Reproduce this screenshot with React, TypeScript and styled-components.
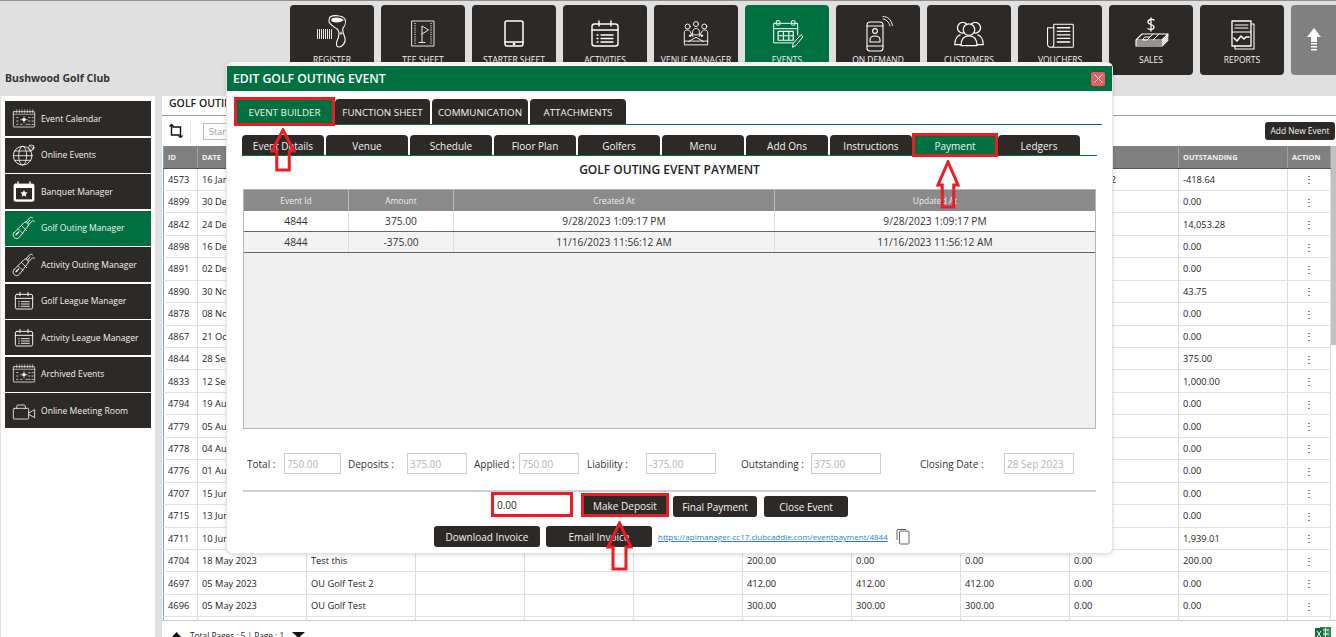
import React from 'react';
import styled, { createGlobalStyle } from 'styled-components';

const DARK = '#2d2926';
const GREEN = '#007041';
const RED = '#ed1c24';
const FONT = '"Open Sans", "Noto Sans", sans-serif';

const GlobalStyle = createGlobalStyle`
  html, body { margin: 0; padding: 0; overflow: hidden; }
  body { font-family: ${FONT}; }
  * { box-sizing: border-box; }
`;

const Line = ({ children, size = 36, view = 36 }: { children: React.ReactNode; size?: number; view?: number }) => (
  <svg width={size} height={size} viewBox={`0 0 ${view} ${view}`} fill="none" stroke="#fff" strokeWidth="1.1" strokeLinecap="round" strokeLinejoin="round">
    {children}
  </svg>
);

const RegisterIcon = () => (
  <Line>
    <path d="M16 1C19-1 28-1 31 3c1 3 0 7-2 9-1 3 1 7 2 10 1 5-3 9-6 9-3 0-3-3-2-6 2-4 3-7 1-11-3-3-7-4-9-8 0-2 0-4 1-5z" />
    <path d="M18 3c3-1 8-1 11 1-3 2-8 2-11 1z" fill="#fff" />
    <path d="M27 16v2.500M25.800 17.200h2.400" strokeWidth="0.9" />
    <g strokeLinecap="butt" strokeWidth="1" stroke="#e8e8e8">
      <path d="M3.500 13v10M5.500 13v10M7.500 13v10M9.500 13v10M11.500 13v10M13.500 13v10M15.500 13v10M17.500 13v10" />
    </g>
  </Line>
);
const TeeSheetIcon = () => (
  <Line>
    <rect x="7" y="5" width="22" height="25" strokeWidth="0.9" />
    <path d="M10 7v21M26 7v21" strokeDasharray="1 1.200" strokeWidth="1.100" strokeLinecap="butt" />
    <path d="M17 26V10l6.500 4-6.500 4" strokeWidth="0.9" />
    <path d="M14 26.500h6" strokeWidth="0.9" />
  </Line>
);
const TabletIcon = () => (
  <Line>
    <rect x="9" y="5" width="18" height="25" rx="2" strokeWidth="1.500" />
    <path d="M9 26h18" strokeWidth="1.300" />
    <circle cx="18" cy="28" r="0.800" fill="#fff" />
  </Line>
);
const CalendarListIcon = ({ size = 36 }: { size?: number }) => (
  <Line size={size}>
    <rect x="5" y="8" width="26" height="22" rx="2.500" strokeWidth="1.400" />
    <path d="M5 14h26M12 5v5M24 5v5" strokeWidth="1.400" />
    <path d="M10 19h1M14 19h12M10 22.500h1M14 22.500h12M10 26h1M14 26h12" strokeWidth="1.300" />
  </Line>
);
const VenueIcon = () => (
  <Line size={30}>
    <circle cx="18" cy="6" r="3" />
    <circle cx="8" cy="9" r="3" />
    <circle cx="28" cy="9" r="3" />
    <path d="M14 15c0-5 8-5 8 0v4h-8zM4 27V16c0-3 5-4 7-1l3 6M32 27V16c0-3-5-4-7-1l-3 6" />
    <path d="M9 27l9-5 9 5M4 27v4h28v-4z" />
    <circle cx="11" cy="20" r="1" fill="#fff" />
    <circle cx="25" cy="20" r="1" fill="#fff" />
  </Line>
);
const EventsIcon = () => (
  <Line size={32}>
    <path d="M25 28H3V6h27v13M3 12h27" />
    <rect x="6" y="3" width="4" height="5" rx="1" />
    <rect x="23" y="3" width="4" height="5" rx="1" />
    <path d="M8 15h17v10H8zM8 20h17M14 15v10M20 15v10" strokeWidth="1.300" />
    <path d="M34 19l2 2-8 10-4 2 1-4z" />
  </Line>
);
const DemandIcon = () => (
  <Line>
    <rect x="7" y="6" width="16" height="29" rx="3" />
    <path d="M7 30h16M7 10h16" />
    <circle cx="15" cy="15" r="2.400" />
    <path d="M10 26v-2c0-3 3-4 5-4s5 1 5 4v2z" />
    <path d="M23 3c3 0 6 3 7 7M23 0.500c5 0 8 3 9.500 9" strokeWidth="0.900" />
  </Line>
);
const CustomersIcon = () => (
  <Line size={32}>
    <circle cx="11" cy="11" r="6" strokeWidth="1.400" />
    <circle cx="25" cy="11" r="6" strokeWidth="1.400" />
    <circle cx="18" cy="13" r="6.500" strokeWidth="1.400" fill={DARK} />
    <path d="M8 19c-3 1-6 5-6 11h7M28 19c3 1 6 5 6 11h-7" strokeWidth="1.400" />
    <path d="M9 31c0-7 3-11 9-11s9 4 9 11z" strokeWidth="1.400" fill={DARK} />
  </Line>
);
const VouchersIcon = () => (
  <Line size={32}>
    <path d="M11 7h21a1 1 0 0 1 1 1v24a1 1 0 0 1-1 1H8M11 7v23c0 2-2 3-3 3s-4-1-4-3V11h7" strokeWidth="1.200" />
    <path d="M15 11h14M15 15h14M15 19h14M15 23h14M15 27h14" strokeWidth="1.500" />
  </Line>
);
const SalesIcon = () => (
  <Line>
    <path d="M21 4c-1-1-6-1-6 2s6 2 6 5-5 3-6 1.500M18 2v13" strokeWidth="1.300" />
    <path d="M9 18h26l-6 6H3zM3 24v2h26l6-6v-2M3 26v2h26l6-6M3 28v2h26l6-6" strokeWidth="1.100" />
    <path d="M12 21h5l-3 3h-4zM20 18l-6 6M26 18l-6 6" strokeWidth="1" />
  </Line>
);
const ReportsIcon = () => (
  <Line>
    <path d="M27 8h3v25H11v-3" />
    <rect x="8" y="5" width="19" height="25" strokeWidth="1.300" />
    <path d="M11 9h13M11 12h13" strokeWidth="1.200" />
    <path d="M10 22l3 3 4-5 3 3 2-2h3" strokeWidth="1.500" />
    <path d="M8 16h19" />
  </Line>
);

const DottedCalendar = () => (
  <Line size={30}>
    <rect x="2" y="7" width="32" height="23" rx="1" strokeWidth="1.100" />
    <path d="M2 11h32M7 4v5M11 4v5M15 4v5M19 4v5M23 4v5M27 4v5M31 4v5" strokeWidth="0.800" />
    <path d="M7 16h2M7 21h2M7 26h2M25 16h2M30 16h2M25 21h2M30 21h2M25 26h2M30 26h2M13 26h2M21 26h2" strokeWidth="1.100" />
    <circle cx="18" cy="19" r="2.200" fill="#fff" />
    <path d="M18 14v1.500M18 22.500v1.500M13 19h1.500M21.500 19h1.500" strokeWidth="0.900" />
  </Line>
);
const GlobeIcon = () => (
  <Line size={30}>
    <circle cx="16" cy="19" r="14" strokeWidth="1.300" />
    <ellipse cx="16" cy="19" rx="6" ry="14" strokeWidth="1.200" />
    <path d="M2 19h28M4 12h24M4 26h24" strokeWidth="1.200" />
    <circle cx="29" cy="7" r="4" fill={DARK} />
    <path d="M26 3l6 6M25 8l4 4M32 4c1 2 0 5-2 6" strokeWidth="1" />
  </Line>
);
const BanquetIcon = () => (
  <Line size={30}>
    <rect x="3" y="6" width="30" height="26" rx="2" fill="#fff" />
    <path d="M9 3v6M27 3v6" strokeWidth="2" />
    <rect x="6" y="12" width="24" height="17" fill={DARK} stroke="none" />
    <path d="M18 15l1.600 3.500 3.900.400-2.900 2.500.9 3.800-3.500-2-3.500 2 .9-3.800-2.900-2.500 3.900-.400z" fill="#fff" stroke="none" />
  </Line>
);
const GolfBagIcon = () => (
  <Line size={30}>
    <path d="M3 25L18 10c3-3 8 1 6 5L11 32c-3 3-6 2-8 0-2-2-2-5 0-7z" strokeWidth="1.300" />
    <path d="M9 19l8 8M14 14l8 8" strokeWidth="1.100" />
    <path d="M6 28l4-4" strokeWidth="2" />
    <path d="M21 9l5-6c2-2 4-1 5 0M25 13l5-5c1-1 3-1 4 0M23 11l4-5" strokeWidth="1.300" />
  </Line>
);
const CameraIcon = () => (
  <Line size={30}>
    <rect x="2" y="14" width="23" height="16" rx="1.500" strokeWidth="1.200" />
    <path d="M7 14v-3c0-1 1-2 2-2h9c1 0 2 1 2 2v3M25 21l9-5v12l-9-5" strokeWidth="1.200" />
  </Line>
);

const NAV: { label: string; icon: React.ReactNode; active?: boolean }[] = [
  { label: 'REGISTER', icon: <RegisterIcon /> },
  { label: 'TEE SHEET', icon: <TeeSheetIcon /> },
  { label: 'STARTER SHEET', icon: <TabletIcon /> },
  { label: 'ACTIVITIES', icon: <CalendarListIcon /> },
  { label: 'VENUE MANAGER', icon: <VenueIcon /> },
  { label: 'EVENTS', icon: <EventsIcon />, active: true },
  { label: 'ON DEMAND', icon: <DemandIcon /> },
  { label: 'CUSTOMERS', icon: <CustomersIcon /> },
  { label: 'VOUCHERS', icon: <VouchersIcon /> },
  { label: 'SALES', icon: <SalesIcon /> },
  { label: 'REPORTS', icon: <ReportsIcon /> },
];

const MENU: { label: string; icon: React.ReactNode; active?: boolean }[] = [
  { label: 'Event Calendar', icon: <DottedCalendar /> },
  { label: 'Online Events', icon: <GlobeIcon /> },
  { label: 'Banquet Manager', icon: <BanquetIcon /> },
  { label: 'Golf Outing Manager', icon: <GolfBagIcon />, active: true },
  { label: 'Activity Outing Manager', icon: <GolfBagIcon /> },
  { label: 'Golf League Manager', icon: <CalendarListIcon size={30} /> },
  { label: 'Activity League Manager', icon: <CalendarListIcon size={30} /> },
  { label: 'Archived Events', icon: <DottedCalendar /> },
  { label: 'Online Meeting Room', icon: <CameraIcon /> },
];

const ROWS: string[][] = [
  ['4573', '16 Jan 2024', '', '', '', '', '', '', '10,000.02', '-418.64'],
  ['4899', '30 Dec 2023', '', '', '', '', '', '', '', '0.00'],
  ['4842', '24 Dec 2023', '', '', '', '', '', '', '', '14,053.28'],
  ['4898', '16 Dec 2023', '', '', '', '', '', '', '', '0.00'],
  ['4891', '02 Dec 2023', '', '', '', '', '', '', '', '0.00'],
  ['4890', '30 Nov 2023', '', '', '', '', '', '', '', '43.75'],
  ['4878', '08 Nov 2023', '', '', '', '', '', '', '', '0.00'],
  ['4867', '21 Oct 2023', '', '', '', '', '', '', '', '0.00'],
  ['4844', '28 Sep 2023', '', '', '', '', '', '', '', '375.00'],
  ['4833', '12 Sep 2023', '', '', '', '', '', '', '', '1,000.00'],
  ['4794', '19 Aug 2023', '', '', '', '', '', '', '', '0.00'],
  ['4779', '05 Aug 2023', '', '', '', '', '', '', '', '0.00'],
  ['4778', '04 Aug 2023', '', '', '', '', '', '', '', '0.00'],
  ['4776', '01 Aug 2023', '', '', '', '', '', '', '', '0.00'],
  ['4707', '15 Jun 2023', '', '', '', '', '', '', '', '0.00'],
  ['4715', '13 Jun 2023', '', '', '', '', '', '', '', '0.00'],
  ['4711', '10 Jun 2023', '', '', '', '', '', '', '', '1,939.01'],
  ['4704', '18 May 2023', 'Test this', '', '', '200.00', '0.00', '0.00', '0.00', '200.00'],
  ['4697', '05 May 2023', 'OU Golf Test 2', '', '', '412.00', '412.00', '412.00', '0.00', '0.00'],
  ['4696', '05 May 2023', 'OU Golf Test', '', '', '300.00', '300.00', '300.00', '0.00', '0.00'],
  ['', '', '', '', '', '', '', '', '', ''],
];

const COLUMNS = [34, 109, 109, 109, 109, 109, 109, 109, 109, 109, 109, 43];

const OUTER_TABS = [
  { label: 'EVENT BUILDER', width: 97, active: true },
  { label: 'FUNCTION SHEET', width: 95 },
  { label: 'COMMUNICATION', width: 96 },
  { label: 'ATTACHMENTS', width: 96 },
];
const INNER_TABS = ['Event Details', 'Venue', 'Schedule', 'Floor Plan', 'Golfers', 'Menu', 'Add Ons', 'Instructions', 'Payment', 'Ledgers'];

const PAYMENTS = [
  ['4844', '375.00', '9/28/2023 1:09:17 PM', '9/28/2023 1:09:17 PM'],
  ['4844', '-375.00', '11/16/2023 11:56:12 AM', '11/16/2023 11:56:12 AM'],
];

const FIELDS = [
  { label: 'Total :', value: '750.00', before: 4, labelWidth: 37, inputWidth: 57 },
  { label: 'Deposits :', value: '375.00', before: 7, labelWidth: 59, inputWidth: 60 },
  { label: 'Applied :', value: '750.00', before: 7, labelWidth: 45, inputWidth: 60 },
  { label: 'Liability :', value: '-375.00', before: 8, labelWidth: 59, inputWidth: 70 },
  { label: 'Outstanding :', value: '375.00', before: 25, labelWidth: 70, inputWidth: 70 },
  { label: 'Closing Date :', value: '28 Sep 2023', before: 39, labelWidth: 84, inputWidth: 70 },
];

const ARROWS = [
  { left: 270, top: 127, width: 26, height: 44 },
  { left: 936, top: 159, width: 24, height: 49 },
  { left: 606, top: 520, width: 27, height: 50 },
];

export default function App() {
  return (
    <Page>
      <GlobalStyle />
      <TopBar>
        <ClubName>Bushwood Golf Club</ClubName>
        <Nav>
          {NAV.map((item) => (
            <NavButton key={item.label} $active={item.active}>
              <NavIcon>{item.icon}</NavIcon>
              <NavLabel>{item.label}</NavLabel>
            </NavButton>
          ))}
          <UpButton>
            <svg width="14" height="24" viewBox="0 0 14 24" fill="#fff">
              <path d="M7 0l7 9H10v5H4V9H0z" />
              <path d="M4 15h6v1.500H4zM4 18h6v1.500H4zM4 21h6v1.500H4z" />
            </svg>
          </UpButton>
        </Nav>
      </TopBar>

      <Body>
        <Sidebar>
          {MENU.map((item) => (
            <MenuItem key={item.label} $active={item.active}>
              <MenuIcon>{item.icon}</MenuIcon>
              {item.label}
            </MenuItem>
          ))}
        </Sidebar>

        <Main>
          <MainTitle>GOLF OUTING</MainTitle>
          <Toolbar>
            <RefreshButton>
              <svg width="14" height="14" viewBox="0 0 14 14" fill="none" stroke="#111" strokeWidth="1.400">
                <path d="M2.500 0.500v10.500h8M3.500 3h8v10.500" />
                <path d="M0.500 2.500l2-2 2 2M9.500 11.500l2 2 2-2" />
              </svg>
            </RefreshButton>
            <StartInput placeholder="Start Date" />
            <AddButton>Add New Event</AddButton>
          </Toolbar>
          <TableWrap>
            <Table>
              <colgroup>
                {COLUMNS.map((w, i) => (
                  <col key={i} width={w} />
                ))}
              </colgroup>
              <thead>
                <tr>
                  <Th>ID</Th>
                  <Th>DATE</Th>
                  <Th />
                  <Th />
                  <Th />
                  <Th />
                  <Th />
                  <Th />
                  <Th />
                  <Th />
                  <Th>OUTSTANDING</Th>
                  <Th>ACTION</Th>
                </tr>
              </thead>
              <tbody>
                {ROWS.map((row, r) => (
                  <tr key={r}>
                    {row.slice(0, 3).map((cell, c) => (
                      <Td key={c}>{cell}</Td>
                    ))}
                    <Td />
                    {row.slice(3, 9).map((cell, c) => (
                      <Td key={c}>{cell}</Td>
                    ))}
                    <Td>{row[9]}</Td>
                    <ActionTd>{row[0] && '⋮'}</ActionTd>
                  </tr>
                ))}
              </tbody>
            </Table>
            <Scrollbar />
          </TableWrap>
          <Footer>
            <svg width="11" height="6" viewBox="0 0 11 6"><path d="M5.500 0L11 6H0z" fill="#111" /></svg>
            <span>Total Pages : 5 | Page : 1</span>
            <svg width="13" height="6" viewBox="0 0 13 6"><path d="M0 0h13L6.500 6z" fill="#111" /></svg>
            <ExcelMark>
              <svg width="16" height="14" viewBox="0 0 16 14">
                <rect x="5" width="11" height="14" fill="#2e8b57" />
                <path d="M7 3h7M7 7h7M10.500 1v12" stroke="#fff" strokeWidth="1" />
                <rect y="1" width="8" height="12" fill="#0e6b3a" />
                <path d="M2 4l4 6M6 4l-4 6" stroke="#fff" strokeWidth="1" />
              </svg>
            </ExcelMark>
          </Footer>
        </Main>
      </Body>

      <Modal>
        <ModalHeader>
          EDIT GOLF OUTING EVENT
          <CloseButton>
            <svg width="9" height="9" viewBox="0 0 9 9" stroke="#fff" strokeWidth="1"><path d="M0.500 0.500l8 8M8.500 0.500l-8 8" /></svg>
          </CloseButton>
        </ModalHeader>

        <OuterTabs>
          {OUTER_TABS.map((tab) => (
            <OuterTab key={tab.label} $width={tab.width} $active={tab.active}>
              {tab.label}
            </OuterTab>
          ))}
        </OuterTabs>

        <InnerTabs>
          {INNER_TABS.map((tab) => (
            <InnerTab key={tab} $active={tab === 'Payment'}>
              {tab}
            </InnerTab>
          ))}
        </InnerTabs>

        <Section>
          <SectionTitle>GOLF OUTING EVENT PAYMENT</SectionTitle>
          <PaymentFrame>
            <PaymentGrid $head>
              <span>Event Id</span>
              <span>Amount</span>
              <span>Created At</span>
              <span>Updated At</span>
            </PaymentGrid>
            {PAYMENTS.map((row, i) => (
              <PaymentGrid key={i} $alt={i === 1}>
                {row.map((cell, c) => (
                  <span key={c}>{cell}</span>
                ))}
              </PaymentGrid>
            ))}
          </PaymentFrame>

          <Totals>
            {FIELDS.map((f) => (
              <React.Fragment key={f.label}>
                <FieldLabel $before={f.before} $width={f.labelWidth}>{f.label}</FieldLabel>
                <FieldInput $width={f.inputWidth} value={f.value} disabled readOnly />
              </React.Fragment>
            ))}
          </Totals>

          <Divider />

          <DepositRow>
            <DepositInput defaultValue="0.00" />
            <DepositButton>Make Deposit</DepositButton>
            <ActionButton $width={84} $space={4}>Final Payment</ActionButton>
            <ActionButton $width={84} $space={7}>Close Event</ActionButton>
          </DepositRow>

          <InvoiceRow>
            <ActionButton $width={106}>Download Invoice</ActionButton>
            <ActionButton $width={106}>Email Invoice</ActionButton>
            <PayLink href="#">https://apimanager-cc17.clubcaddie.com/eventpayment/4844</PayLink>
            <svg width="14" height="17" viewBox="0 0 14 17" fill="none" stroke="#555" strokeWidth="0.900">
              <path d="M10 1.500H2a1 1 0 0 0-1 1V12" />
              <rect x="3.500" y="3" width="9.500" height="13" rx="1" fill="#fff" />
            </svg>
          </InvoiceRow>
        </Section>
      </Modal>

      {ARROWS.map((a) => (
        <Arrow key={a.left} $left={a.left} $top={a.top} width={a.width} height={a.height} viewBox={`0 0 ${a.width} ${a.height}`}>
          <path
            d={`M${a.width / 2} 2 L${a.width - 2} ${Math.round(a.height * 0.52)} H${a.width * 0.74} V${a.height - 2} H${a.width * 0.26} V${Math.round(a.height * 0.52)} H2 Z`}
            fill="none"
            stroke={RED}
            strokeWidth="3"
          />
        </Arrow>
      ))}
    </Page>
  );
}

const Page = styled.div`
  position: relative;
  width: 1336px;
  height: 637px;
  overflow: hidden;
  background: #e0e0e0;
  border-top: 1px solid #8e8e8e;
  display: flex;
  flex-direction: column;
`;

const TopBar = styled.header`
  height: 89px;
  display: flex;
  justify-content: space-between;
  padding: 4px 0 0 5px;
  flex-shrink: 0;
`;

const ClubName = styled.div`
  align-self: flex-end;
  margin-bottom: 4px;
  font-size: 10.5px;
  line-height: 16px;
  font-weight: 700;
  color: #333;
`;

const Nav = styled.nav`
  display: flex;
  gap: 7px;
  align-items: flex-start;
`;

const NavButton = styled.div<{ $active?: boolean }>`
  width: 84px;
  height: 70px;
  border-radius: 4px;
  background: ${(p) => (p.$active ? GREEN : DARK)};
  display: flex;
  flex-direction: column;
  align-items: center;
  padding-top: 11px;
`;

const NavIcon = styled.div`
  height: 36px;
  display: flex;
  align-items: center;
  justify-content: center;

  svg {
    overflow: visible;
  }
`;

const NavLabel = styled.div`
  margin-top: 2px;
  font-size: 8.5px;
  line-height: 12px;
  color: #f2f2f2;
  white-space: nowrap;
`;

const UpButton = styled.div`
  width: 45px;
  height: 70px;
  border-radius: 4px 0 0 4px;
  background: #808080;
  display: flex;
  align-items: center;
  justify-content: center;
`;

const Body = styled.div`
  flex: 1;
  min-height: 0;
  display: flex;
  padding: 6px 0 0 1px;
  gap: 7px;
`;

const Sidebar = styled.aside`
  width: 154px;
  background: #fff;
  padding: 5px 4px;
  display: flex;
  flex-direction: column;
  gap: 1.5px;
`;

const MenuItem = styled.div<{ $active?: boolean }>`
  height: 35px;
  background: ${(p) => (p.$active ? GREEN : DARK)};
  display: flex;
  align-items: center;
  color: #f2f2f2;
  font-size: 8.6px;
  white-space: nowrap;
  padding-left: 7px;
  flex-shrink: 0;
`;

const MenuIcon = styled.div`
  width: 29px;
  display: flex;
  align-items: center;

  svg {
    width: 24px;
    height: 24px;
  }
`;

const Main = styled.main`
  flex: 1;
  min-width: 0;
  background: #fff;
  display: flex;
  flex-direction: column;
`;

const MainTitle = styled.div`
  height: 20px;
  padding: 0 0 0 7px;
  font-size: 10.5px;
  line-height: 15px;
  font-weight: 600;
  color: #222;
  white-space: nowrap;
  border-bottom: 1px solid #999;
  flex-shrink: 0;
`;

const Toolbar = styled.div`
  height: 30px;
  display: flex;
  align-items: center;
  padding-left: 7px;
  flex-shrink: 0;
`;

const RefreshButton = styled.div`
  width: 22px;
  height: 22px;
  display: flex;
  align-items: center;
  border-right: 1px solid #e2e2e2;
`;

const StartInput = styled.input`
  margin-left: 12px;
  width: 110px;
  height: 17px;
  border: 1px solid #bbb;
  padding: 0 5px;
  font-family: ${FONT};
  font-size: 9px;

  &::placeholder {
    color: #999;
  }
`;

const AddButton = styled.div`
  margin-left: auto;
  margin-right: 1px;
  width: 70px;
  height: 18px;
  border-radius: 3px;
  background: ${DARK};
  color: #f2f2f2;
  font-size: 8.4px;
  line-height: 18px;
  text-align: center;
  white-space: nowrap;
`;

const TableWrap = styled.div`
  position: relative;
  height: 475px;
  overflow: hidden;
  flex-shrink: 0;
  border-bottom: 1px solid #ccc;
`;

const Table = styled.table`
  table-layout: fixed;
  width: 1168px;
  margin-left: 1px;
  border-collapse: collapse;
  border-left: 1px solid #6fa3d0;
  font-size: 9.3px;
  color: #222;
`;

const Th = styled.th`
  height: 22px;
  padding: 0 4px;
  background: #808080;
  border-right: 1px solid #a0a0a0;
  border-bottom: 1px solid #555;
  color: #f0f0f0;
  font-size: 7.4px;
  font-weight: 700;
  text-align: left;
  white-space: nowrap;
`;

const Td = styled.td`
  height: 22.45px;
  padding: 0 4px;
  border-right: 1px solid #ddd;
  border-bottom: 1px solid #e2e2e2;
  white-space: nowrap;
  overflow: hidden;
`;

const ActionTd = styled(Td)`
  text-align: center;
  font-size: 10px;
  color: #222;
`;

const Scrollbar = styled.div`
  position: absolute;
  top: 0;
  right: 0;
  width: 5px;
  height: 199px;
  background: #c1c1c1;
`;

const Footer = styled.div`
  display: flex;
  align-items: center;
  gap: 8px;
  padding: 8px 5px 0 9px;
  height: 20px;
  font-size: 8.3px;
  color: #222;
`;

const ExcelMark = styled.div`
  margin-left: auto;
`;

const Modal = styled.section`
  position: absolute;
  left: 226px;
  top: 61px;
  width: 887px;
  height: 492px;
  background: #fff;
  border: 1px solid #e4e4e4;
  border-top: 4px solid #f4f4f4;
  border-radius: 6px;
  box-shadow: 0 1px 4px rgba(0, 0, 0, 0.15);
`;

const ModalHeader = styled.div`
  height: 25px;
  background: ${GREEN};
  color: #fff;
  font-size: 12.2px;
  font-weight: 600;
  line-height: 25px;
  padding-left: 6px;
  display: flex;
  align-items: center;
  justify-content: space-between;
  padding-right: 7px;
`;

const CloseButton = styled.div`
  width: 14px;
  height: 14px;
  border-radius: 2px;
  background: #ef5a5f;
  display: flex;
  align-items: center;
  justify-content: center;
`;

const OuterTabs = styled.div`
  margin: 8px 10px 0 8px;
  padding-left: 1px;
  height: 26px;
  display: flex;
  gap: 2px;
  border-bottom: 1px solid ${GREEN};
`;

const OuterTab = styled.div<{ $width: number; $active?: boolean }>`
  width: ${(p) => p.$width}px;
  height: 25px;
  border-radius: 4px 4px 0 0;
  background: ${(p) => (p.$active ? GREEN : DARK)};
  color: #f2f2f2;
  font-size: 9.8px;
  line-height: 27px;
  text-align: center;
  white-space: nowrap;
  ${(p) => p.$active && `outline: 3px solid ${RED}; outline-offset: -1px; border-radius: 0;`}
`;

const InnerTabs = styled.div`
  margin: 10px 15px 0 15px;
  height: 21px;
  display: flex;
  gap: 2px;
  border-bottom: 1px solid ${GREEN};
`;

const InnerTab = styled.div<{ $active?: boolean }>`
  width: 82px;
  height: 20px;
  border-radius: 4px 4px 0 0;
  background: ${(p) => (p.$active ? GREEN : DARK)};
  color: #f2f2f2;
  font-size: 10px;
  line-height: 22px;
  text-align: center;
  white-space: nowrap;
  ${(p) => p.$active && `outline: 3px solid ${RED}; outline-offset: -1px; border-radius: 0;`}
`;

const Section = styled.div`
  margin: 0 16px;
`;

const SectionTitle = styled.div`
  height: 33px;
  line-height: 28px;
  font-size: 12px;
  font-weight: 600;
  color: #222;
  text-align: center;
`;

const PaymentFrame = styled.div`
  height: 240px;
  background: #f0f0f0;
  border: 1px solid #b5b5b5;
`;

const PaymentGrid = styled.div<{ $head?: boolean; $alt?: boolean }>`
  display: grid;
  grid-template-columns: 105px 105px 321px 1fr;
  height: 21px;
  background: ${(p) => (p.$head ? '#8a8a8a' : p.$alt ? '#f3f3f3' : '#fff')};
  color: ${(p) => (p.$head ? '#eee' : '#333')};
  font-size: ${(p) => (p.$head ? '8.4px' : '10.2px')};
  border-bottom: ${(p) => (p.$head ? 'none' : '1px solid #666')};

  span {
    display: flex;
    align-items: center;
    justify-content: center;
    border-right: 1px solid ${(p) => (p.$head ? '#bbb' : '#ddd')};
  }

  span:last-child {
    border-right: none;
  }
`;

const Totals = styled.div`
  margin-top: 24px;
  height: 21px;
  display: flex;
  align-items: center;
`;

const FieldLabel = styled.label<{ $before: number; $width: number }>`
  margin-left: ${(p) => p.$before}px;
  width: ${(p) => p.$width}px;
  font-size: 10px;
  color: #333;
  white-space: nowrap;
`;

const FieldInput = styled.input<{ $width: number }>`
  width: ${(p) => p.$width}px;
  height: 21px;
  padding: 0 2px;
  border: 1px solid #ccc;
  background: #fff;
  font-family: ${FONT};
  font-size: 10px;
  color: #b5b5b5;
`;

const Divider = styled.div`
  margin-top: 16px;
  height: 2px;
  background: #cfcfcf;
`;

const DepositRow = styled.div`
  margin-top: 0;
  padding-left: 248px;
  height: 25px;
  display: flex;
  align-items: flex-end;
`;

const DepositInput = styled.input`
  width: 82px;
  height: 25px;
  border: 3px solid ${RED};
  padding: 0 3px;
  font-family: ${FONT};
  font-size: 10px;
  color: #222;
  outline: none;
`;

const DepositButton = styled.div`
  margin-left: 8px;
  width: 88px;
  height: 24px;
  border: 3px solid ${RED};
  background: ${DARK};
  color: #f2f2f2;
  font-size: 10px;
  line-height: 20px;
  text-align: center;
  white-space: nowrap;
`;

const ActionButton = styled.div<{ $width: number; $space?: number }>`
  width: ${(p) => p.$width}px;
  height: 21px;
  margin-left: ${(p) => p.$space ?? 0}px;
  border-radius: 3px;
  background: ${DARK};
  color: #f2f2f2;
  font-size: 10px;
  line-height: 22px;
  text-align: center;
  white-space: nowrap;
`;

const InvoiceRow = styled.div`
  margin-top: 9px;
  padding-left: 191px;
  display: flex;
  align-items: center;
  gap: 6px;
`;

const PayLink = styled.a`
  font-size: 8px;
  color: #2a7fd0;
  white-space: nowrap;
  margin-right: 2px;
`;

const Arrow = styled.svg<{ $left: number; $top: number }>`
  position: absolute;
  left: ${(p) => p.$left}px;
  top: ${(p) => p.$top}px;
`;
